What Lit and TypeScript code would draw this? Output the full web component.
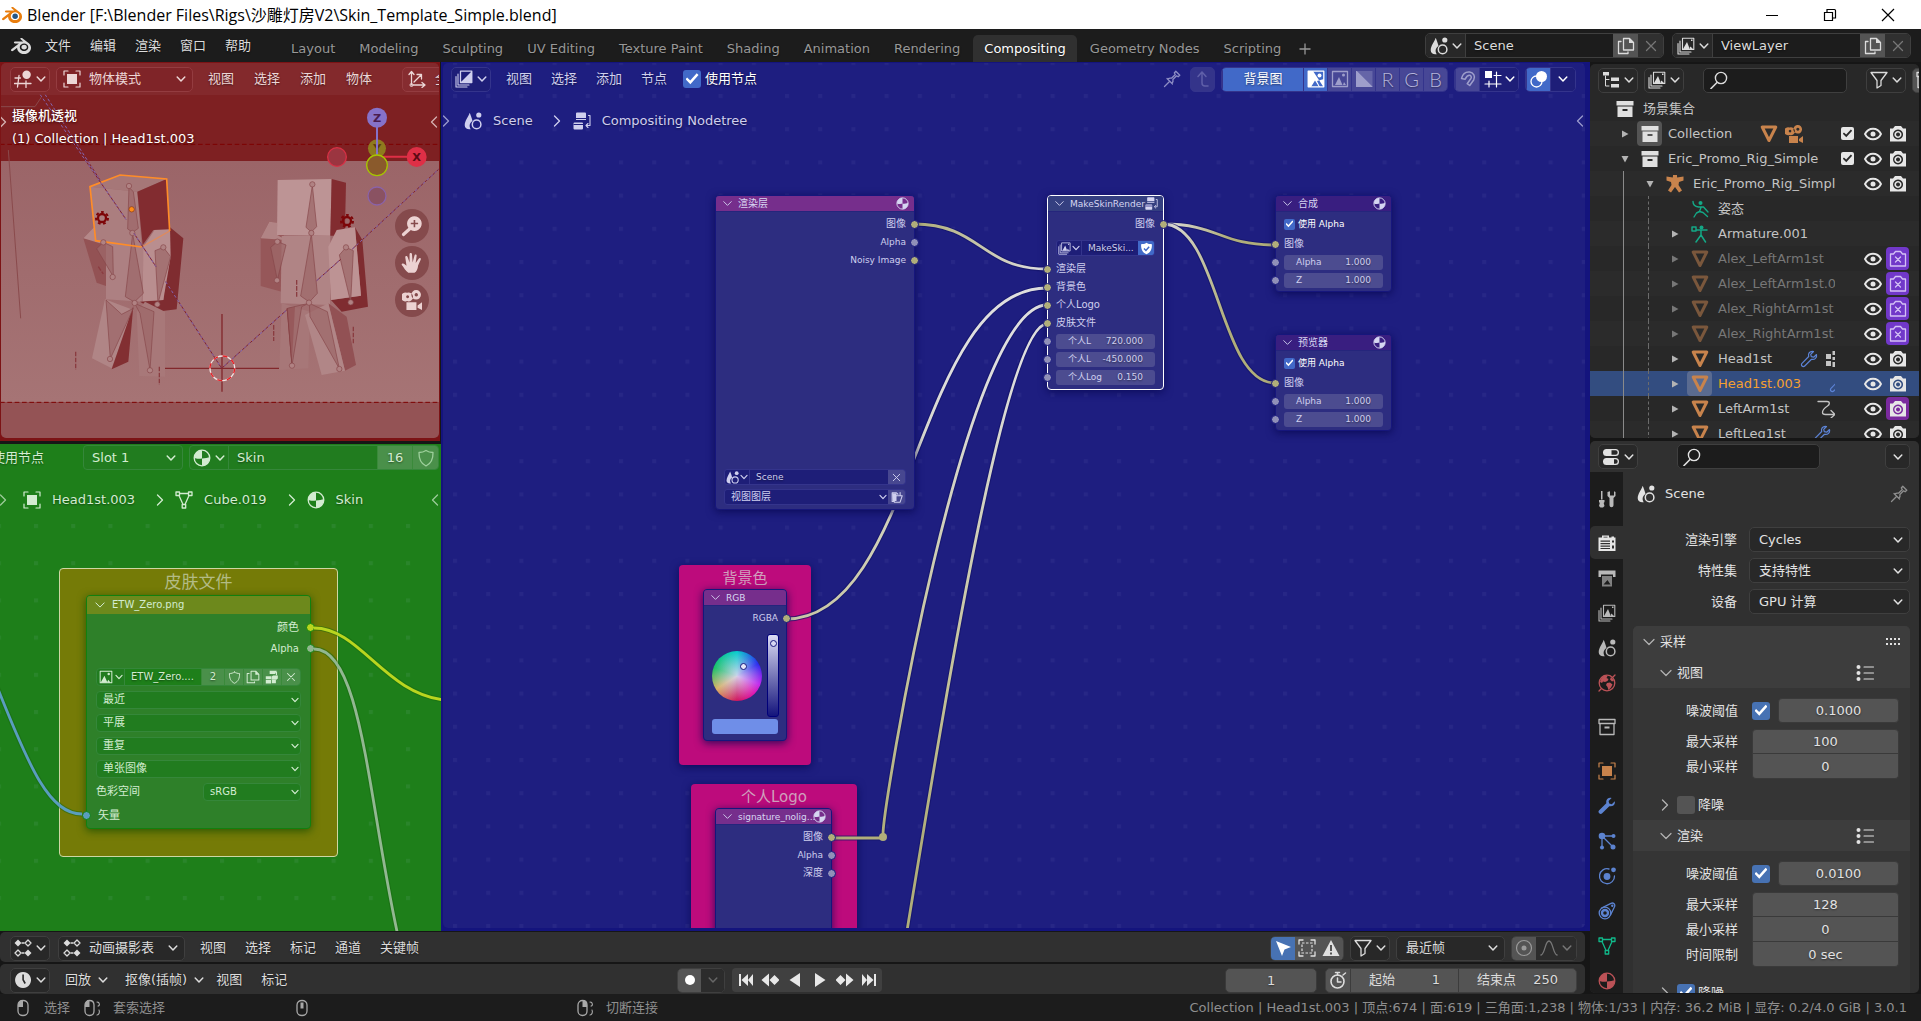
import { LitElement, html, css, svg, nothing, type TemplateResult } from "lit";
import { customElement, property } from "lit/decorators.js";
import { classMap } from "lit/directives/class-map.js";

/* ---------------------------------------------------------------- icons */

const line = (d: string, w = 1.3) =>
  svg`<path d=${d} fill="none" stroke="currentColor" stroke-width=${w} stroke-linejoin="round" stroke-linecap="round"/>`;
const fill = (d: string) => svg`<path d=${d} fill="currentColor" fill-rule="evenodd"/>`;
const dim = (d: string) => svg`<path d=${d} fill="currentColor" opacity=".65" fill-rule="evenodd"/>`;

const blenderMark =
  "M12.51 13.214c.046-.8.438-1.506 1.03-2.006a3.424 3.424 0 0 1 2.212-.79c.85 0 1.631.3 2.211.79.592.5.983 1.206 1.028 2.005.045.823-.285 1.586-.865 2.153a3.389 3.389 0 0 1-2.374.938 3.393 3.393 0 0 1-2.376-.938c-.58-.567-.91-1.33-.865-2.152M7.35 14.831c.006.314.106.922.256 1.398a7.372 7.372 0 0 0 1.593 2.757 8.227 8.227 0 0 0 2.787 2.001 8.947 8.947 0 0 0 3.66.76 8.964 8.964 0 0 0 3.657-.772 8.285 8.285 0 0 0 2.785-2.01 7.428 7.428 0 0 0 1.592-2.762 6.964 6.964 0 0 0 .25-3.074 7.123 7.123 0 0 0-1.016-2.779 7.764 7.764 0 0 0-1.852-2.043h.002L13.566 2.55l-.02-.015c-.492-.378-1.319-.376-1.86.002-.547.382-.609 1.015-.123 1.415l-.001.001 3.126 2.543-9.53.01h-.013c-.788.001-1.545.518-1.695 1.172-.154.665.38 1.217 1.2 1.22V8.9l4.83-.01-8.62 6.617-.034.025c-.813.622-1.075 1.658-.563 2.313.52.667 1.625.668 2.447.004L7.414 14s-.069.52-.063.831zm12.09 1.741c-.97.988-2.326 1.548-3.795 1.55-1.47.004-2.827-.552-3.797-1.538a4.51 4.51 0 0 1-1.036-1.622 4.282 4.282 0 0 1 .282-3.519 4.702 4.702 0 0 1 1.153-1.371c.942-.768 2.141-1.183 3.396-1.185 1.256-.002 2.455.41 3.398 1.175.48.391.87.854 1.152 1.367a4.28 4.28 0 0 1 .522 1.706 4.236 4.236 0 0 1-.239 1.811 4.54 4.54 0 0 1-1.035 1.626";

const wrenchPath =
  "M16.8 4.2l-3 3-2.6-.6-.6-2.6 3-3c-2.600-.8-5.200.8-5.400 3.400l.1 1.800-7.100 7.100a2 2 0 0 0 3 3l7.100-7.100c3.600.8 6.200-1.600 5.500-5z";

const icons: Record<string, { box?: string; art: unknown }> = {
  blender: { box: "0 1 24 22", art: fill(blenderMark) },
  blenderColor: {
    box: "0 1 24 22",
    art: svg`<path d=${blenderMark} fill="#e87d0d"/><circle cx="15.700" cy="13.500" r="4.600" fill="#fff"/><circle cx="15.750" cy="13.400" r="3.300" fill="#265787"/>`,
  },
  chev: { box: "4 4 10 10", art: line("M5.200 7l3.800 4 3.800-4", 1.5) },
  chevThin: { box: "3 3 12 12", art: line("M4 6.500l5 5 5-5", 1.2) },
  right: { box: "3 3 12 12", art: line("M6.500 4l5 5-5 5", 1.300) },
  left: { box: "3 3 12 12", art: line("M11.500 4l-5 5 5 5", 1.300) },
  view3d: { art: svg`${line("M1 8h5.500M0.500 13.500h16.500M5 5.500L3.500 17M12 11v6.500", 1.300)}<circle cx="12.600" cy="4.700" r="4.200" fill="currentColor"/>` },
  object: { art: svg`${line("M1 5V1h4M13 1h4v4M17 13v4h-4M5 17H1v-4", 1.200)}<rect x="4" y="4" width="10" height="10" fill="currentColor"/>` },
  orient: { art: svg`${line("M3.500 15V2M1 4.500L3.500 1.500 6 4.500M5 15h11.500M14 12.500l3 2.500-3 2.500M6 12l7-7M9 4.500h4.500V9", 1.300)}<circle cx="3.500" cy="15" r="1.500" fill="none" stroke="currentColor"/>` },
  comp: { art: svg`${line("M5.500 1.200h11.300v11.300H5.500z", 1.300)}${fill("M17 1v12H5z")}${line("M3 4v11h11M1 6.500V17h11", 1.100)}` },
  scene: { art: svg`${fill("M5.700.8C4.500 4.500.7 9 .7 13.200c0 2.600 2.200 4 4.500 4h1.600c-2-3-1.400-6.300 1.700-8.300C8 6.500 6.500 3 5.700.8z")}<circle cx="14.800" cy="3" r="2.600" fill="currentColor"/><circle cx="12.600" cy="12.400" r="4.300" fill="none" stroke="currentColor" stroke-width="1.500"/>` },
  nodetree: { art: svg`${fill("M4 .5h8a1 1 0 0 1 1 1V6H3V1.500a1 1 0 0 1 1-1zM2 10.500h7a1 1 0 0 1 1 1v5a1 1 0 0 1-1 1H1.500a1 1 0 0 1-1-1v-5a1 1 0 0 1 1-1zM3 7h10v1H3z")}<path d="M.5 12.500h9.500" stroke="#1e1e80"/>${line("M15.500 3.500h1.500v10h-3.500M15 11.500l-2 2 2 2", 1.100)}` },
  meshdata: { art: svg`${line("M4 4.500l4 9M14 4.500l-4 9M5 2.500h8M1 1h3.500v3.500H1zM13.500 1H17v3.500h-3.500zM7.200 13.500h3.500V17H7.200z", 1.300)}` },
  material: { art: svg`<circle cx="9" cy="9" r="7.800" fill="none" stroke="currentColor" stroke-width="1.300"/>${fill("M9 1.200V9.500C6 9.800 3 9.800 1.200 9A7.800 7.800 0 0 1 9 1.200zM9 9.500c3-.2 6-.6 7.800-1.500A7.800 7.800 0 0 1 9 16.800z")}` },
  shield: { art: line("M9 1.500c2.200 1.500 4.500 2 7 2 .2 6.500-1.800 11-7 13.500C3.800 14.500 1.800 10 2 3.500c2.500 0 4.800-.5 7-2z") },
  shieldOn: { art: svg`${fill("M9 1c2.200 1.500 4.500 2 7.500 2 .2 7-2 11.500-7.500 14C3.500 14.500 1.300 10 1.500 3c3 0 5.300-.5 7.500-2z")}<path d="M5.500 9l2.700 2.700 4.500-5" fill="none" stroke="#4169c8" stroke-width="2"/>` },
  image: { art: svg`${line("M1.500 1.500h15v15h-15z")}${fill("M2 16.500l5-9 4 9zM10 16.500l2-4 3 4z")}<circle cx="12.500" cy="5" r="1.600" fill="currentColor"/>` },
  layers: { art: svg`${line("M5.500 1.200h11.300v11.300H5.500zM3 4v11h11M1 6.500V17h11", 1.100)}${fill("M6 12l4-7 2.800 7zM12 12l1.500-2.500L16 12zM14 2.500h1.500V4H14z")}` },
  copy: { art: svg`${line("M6.500 1.500h6l4 4v7.500h-10zM4 4.500H1.500v12h9.500V15", 1.300)}${fill("M12 1l5 5h-5z")}` },
  pack: { art: fill("M6 1h9l-2 4H6zM15.500 1.500v4.500L14 7V3zM1 8h7v4H1zM8.500 8.500l2-1.500h6v4l-2 1.500h-6zM1 13h7v4.500H1zM9 13h5v4H9z") },
  close: { art: line("M4.500 4.500l9 9M13.500 4.500l-9 9", 1.300) },
  folderRef: { art: svg`${line("M3 2.500h6l2 2M3 2.500v12h3l2-8h9l-3 9H6M14 2v4", 1.500)}${fill("M3 3h6v11H4z")}` },
  pin: { art: line("M1.500 16.500l5-5M4 8.500l5.500 5.500M5 9c1-1 2-1.200 3.500-.8l3.800-3.700-1-1.500 1.500-1.700 4 4-1.700 1.500-1.500-1-3.700 3.700c.4 1.500.2 2.500-.9 3.500") },
  up: { art: line("M4 6.500L8 2l4 4.500M8 2v11c0 2 1 3 3 3h3", 1.500) },
  imgAlpha: { art: svg`${line("M1.200 1.200h15.600v15.600H1.200z")}${fill("M1 1h5l10.500 16H12L8 10.500 4 17H1zM10 11l3 6h4V9z")}<circle cx="12.500" cy="5.500" r="2" fill="currentColor"/>` },
  imgColor: { art: svg`${line("M1.500 1.500h15v15h-15z")}${fill("M4 15l4-8 3.500 8zM12 15l1-3 2 3z")}<circle cx="12.500" cy="5" r="1.500" fill="currentColor"/>` },
  alpha: { art: svg`${fill("M1 1h1l15.500 15.500v.5H1z")}<path d="M2 1h15.500v15.500z" fill="currentColor" opacity=".35"/>` },
  magnet: { art: line("M2.500 8.500c1-4 4-6.800 8-6.500 4 .3 6.300 4.500 4.200 8l-4 5.500-2.500-1.800 3.700-5.200c1-1.500 0-3.200-1.500-3.200-2 0-3.300 1.800-4.400 4z", 1.500) },
  snap: { art: svg`${fill("M1 1h7v7H1z")}${line("M12.500 2v15M5 11v6M10 5.500h7M1 14h16", 1.200)}` },
  overlay: { art: svg`<circle cx="11.500" cy="6.500" r="5.500" fill="currentColor"/><circle cx="6.500" cy="11.500" r="5.500" fill="none" stroke="currentColor" stroke-width="1.300"/>` },
  outliner: { art: svg`${fill("M1 1h6v3.500H1zM9 6.500h8v3.500H9zM9 13h8v3.500H9z")}${line("M3.500 5v10H7M3.500 8.500H7", 1)}` },
  search: { art: svg`<circle cx="11" cy="7" r="5.600" fill="none" stroke="currentColor" stroke-width="1.400"/>${line("M7 11.500L1 17.500", 1.600)}` },
  filter: { art: line("M1 1.500h16L11 9.500v5l-4 2.500V9.500z", 1.300) },
  collection: { art: fill("M.5 1h17v4.500H.5zM1.500 6.500h15V17h-15zM6.500 9v2h5V9z") },
  collectionLine: { art: svg`${line("M1 1.500h16v4H1zM2 5.500h14v11H2z")}${fill("M6.500 8.500h5v2h-5z")}` },
  mesh: { art: line("M2.200 2h13.600L9 15.500z", 3) },
  movie: { art: fill("M4.500 2.500a4 4 0 1 1 .1 7.500 4 4 0 1 1-.1-7.500zM5 4.800a1.300 1.300 0 1 0 .1 0zM12.800 0a4.300 4.300 0 1 1-.1 8.600 4.300 4.300 0 0 1 0-8.600zM12.800 2.800a1.500 1.500 0 1 0 .1 0zM4 11h9v7H4zM14 14l4-3v7l-4-2z") },
  armature: { art: fill("M7 .8a2 2 0 0 1 4 0l.2 1.700L17.500 1.500v4L13 7l-.5 3 3.500 5.500-3 2-4-5.500-4 5.500-3-2L5.500 10 5 7 .5 5.500v-4l6.300 1z") },
  pose: { art: svg`${line("M2 1.500c0 3 2 5 5.500 5.500h5l4.500 5M10 7.500l-1.500 4-3 1.500L3 17M8.500 11.500l3.500 1 4.500 4", 1.400)}<circle cx="9.500" cy="3" r="2" fill="currentColor"/>` },
  armdata: { art: svg`${line("M1 2h4v4H1zM5 5h11M10 6v4l-5 7M10 10l4.500 7", 1.500)}<circle cx="10.500" cy="2.500" r="2" fill="currentColor"/>` },
  wrench: { art: fill(wrenchPath) },
  wrenchLine: { art: line("M16.500 4.500l-2.800 2.700-2.400-.5-.6-2.400 2.800-2.800c-2.500-.6-4.800 1-5 3.300l.2 1.700-6.700 6.800a1.900 1.900 0 0 0 2.700 2.700l6.800-6.700c3.300.7 5.700-1.500 5-4.800z", 1.200) },
  vgroup: { art: fill("M1 4h5v5H1zM1 11h5v5H1zM7.500 1H13v4H7.500zM7.500 7H12v3H7.500zM7.500 12H12v5H7.500z") },
  curve: { art: line("M1 1.500h9c3 0 3 3 .5 4.500-3 2-5 4-5 6.500 0 1.500 1.500 2 3 2h9M14 10.500l4 4-4 3.500", 1.300) },
  eye: { art: svg`${line("M1 9c2-4 5-5.300 8-5.300S15 5 17 9c-2 4-5 5.300-8 5.300S3 13 1 9z", 1.900)}<circle cx="9" cy="9" r="2.500" fill="currentColor"/>` },
  camera: { art: fill("M1 3.500h3L6 1h6l2 2.500h3V16.500H1zM9 4.500a5 5 0 1 0 .1 0zM9 6a3.500 3.500 0 1 1-.1 0zM9 7.500a2 2 0 1 0 .1 0z") },
  cameraOff: { art: line("M1.500 4h3L6.500 1.500h5L13.500 4h3v12h-15zM6.500 7l5 5M11.500 7l-5 5", 1.300) },
  properties: { art: svg`${fill("M4.500 1h9a3.500 3.500 0 0 1 0 7h-9a3.500 3.500 0 0 1 0-7zM9.500 2.300v4.400h4a2.200 2.200 0 0 0 0-4.400z")}${fill("M4.500 10h9a3.500 3.500 0 0 1 0 7h-9a3.500 3.500 0 0 1 0-7zM12 11.300v4.400h1.500a2.200 2.200 0 0 0 0-4.400z")}` },
  tool: { art: svg`${fill("M3 1h1.500v8.500H3zM1 10h5.500v2l-.8 1 .8 3-1.500 1.500h-2.500L1 16l.8-3L1 12zM9.500 2v4l2 2V15c0 3 4 3 4 0V8l2-2V2l-1.500-.8v4.300h-4V1.200z")}` },
  render: { art: fill("M.5 3.500H4V1.500h7v2h2.500v-1H16v1h1.500V17H.5zM5.500 3.500h4v-.7h-4zM2.500 6.500v1.200H12V6.500zM2.500 9v1.200H12V9zM2.500 11.500v1.200H12v-1.200zM2.500 14v1H12v-1zM14 6.500v2h2v-2zM14 11.500v3h2v-3z") },
  output: { art: svg`${fill("M.5 1.500h17V8H15V5.500H3V8H.5z")}${dim("M4 7h10v10.500H4zM5.500 15.500h7L9.500 11z")}` },
  world: { art: svg`<circle cx="9" cy="9" r="7.800" fill="none" stroke="currentColor" stroke-width="1.300"/>${fill("M3.500 4c2-2.500 5-3 6-2l-1 2 2 1-1 2-2.500 1-2-.5-1 1.500-2-1zM9 9l3-.5 2.500 2-1.500 3-2.500 2.500-1-3-1.500-2zM13 3l3 3.500-2 1-2-2z")}${line("M1 17l2-2M17 1l-2 2")}` },
  particles: { art: svg`${line("M4.500 4H15M4 5v10M5 5l10 10", 1.300)}<circle cx="4" cy="4" r="3.300" fill="currentColor"/><circle cx="15.500" cy="4" r="2" fill="currentColor"/><circle cx="4" cy="15.500" r="2" fill="currentColor"/><circle cx="15" cy="15" r="2.500" fill="currentColor"/>` },
  physics: { art: svg`${line("M11 2A7.500 7.500 0 1 0 16.500 9", 1.300)}<circle cx="9" cy="9.500" r="3.400" fill="currentColor"/><circle cx="15.500" cy="2.800" r="2.400" fill="currentColor"/>` },
  constraint: { art: svg`<circle cx="7" cy="11" r="5.800" fill="none" stroke="currentColor" stroke-width="1.300"/><circle cx="7" cy="11" r="3" fill="none" stroke="currentColor" stroke-width="2.400"/>${line("M3.500 6l9.500-4.700c2.500-1 4.500 1 3.500 3.500L12.500 13")}<circle cx="14.300" cy="3.700" r="1.200" fill="currentColor"/>` },
  preset: { art: svg`<circle cx="2.500" cy="3" r="2" fill="currentColor"/><circle cx="2.500" cy="9" r="2" fill="currentColor"/><circle cx="2.500" cy="15" r="2" fill="currentColor"/>${line("M8 3h9.500M8 9h9.500M8 15h9.500", 1.100)}` },
  grip: { box: "0 0 16 8", art: fill("M0 0h2v2H0zM4 0h2v2H4zM8 0h2v2H8zM12 0h2v2h-2zM0 5h2v2H0zM4 5h2v2H4zM8 5h2v2H8zM12 5h2v2h-2z") },
  dope: { art: svg`${fill("M4 .5L7.500 4 4 7.500.5 4zM14 10.500l3.500 3.500-3.500 3.500-3.500-3.500z")}${line("M14 1l3 3-3 3-3-3zM4 11l3 3-3 3-3-3z", 1.300)}${line("M8 4h2M8 14h2", 1.300)}` },
  clock: { art: fill("M9 1a8 8 0 1 0 .1 0zM8.300 3.500h1.600v5l2 3.500-1.400 1-2.200-4z") },
  record: { art: svg`<circle cx="9" cy="9" r="5" fill="currentColor"/>` },
  first: { art: fill("M3 3h2v12H3zM12 3v12L5.500 9zM17 3v12l-5-6z") },
  prevKey: { art: fill("M8 2.500v13L.5 9zM13.500 4l5 5-5 5-5-5z") },
  playBack: { art: fill("M14 2v14L3.500 9z") },
  play: { art: fill("M4 2v14L14.500 9z") },
  nextKey: { art: fill("M10 2.500v13L17.500 9zM4.500 4l-5 5 5 5 5-5z") },
  last: { art: fill("M15 3h-2v12h2zM6 3v12l6.500-6zM1 3v12l5-6z") },
  cursor: { art: fill("M2 2l15 6-6.500 2.500L8 17z") },
  selbox: { art: svg`${line("M1 5V1h4M13 1h4v4M17 13v4h-4M5 17H1v-4", 1.300)}<rect x="4" y="4" width="10" height="10" fill="none" stroke="currentColor" stroke-width="1.200" stroke-dasharray="2.500 1.500"/>` },
  warn: { art: fill("M9 1l8.500 16H.5zM8 6v6h2V6zM8 13.500v2h2v-2z") },
  stopwatch: { art: svg`<circle cx="8.500" cy="10.500" r="6.500" fill="none" stroke="currentColor" stroke-width="1.600"/>${line("M6.500 1.500h4M8.500 2v2M14 4l2.500-2M8.500 7v4H12", 1.500)}` },
  proportional: { art: svg`<circle cx="9" cy="9" r="7.500" fill="none" stroke="currentColor" stroke-width="1.200"/><circle cx="9" cy="9" r="2.500" fill="currentColor"/>` },
  falloff: { art: line("M1 16c4-1 4-14 8-14s4 13 8 14") },
  mouse: { art: svg`${line("M4 8V6c0-6 10-6 10 0v6c0 6-10 6-10 0z", 1.300)}${fill("M4 8V6c0-3 2-5 5-5v7z")}` },
  mouseMove: { art: svg`${line("M2 8V6c0-6 9-6 9 0v6c0 6-9 6-9 0z", 1.300)}${fill("M2 8V6c0-3 2-5 4.500-5v7z")}${line("M14 3c3 0 3 4 1 4M14 16c2 0 3-3 2-5", 1.100)}` },
  mouseMid: { art: svg`${line("M4 8V6c0-6 10-6 10 0v6c0 6-10 6-10 0z", 1.300)}${fill("M7.500 3.500h3v6h-3z")}` },
  mouseRight: { art: svg`${line("M2 8V6c0-6 9-6 9 0v6c0 6-9 6-9 0z", 1.300)}${fill("M11 8V6c0-3-2-5-4.500-5v7z")}${line("M14 3c3 0 3 4 1 4M14 16c2 0 3-3 2-5", 1.100)}` },
  zoomIn: { art: svg`${fill("M11 1a6 6 0 1 1-.1 0z")}<path d="M11 4v6M8 7h6" stroke="#854a4c" stroke-width="1.300"/>${line("M7 11.500L2 16", 2.600)}` },
  hand: { art: fill("M6 17c-2-1-3.500-4-5.500-6.500 0-1.200 1.500-1.500 2.500-.5l1.500 1.200L3.500 4.500c-.2-1.500 1.500-1.800 2-.3L7 8.500V2c0-1.500 1.900-1.500 2 0l.5 6.500L11 3c.3-1.500 2-1.200 1.800.3L12 9l2.500-3.500c.9-1.200 2.200-.3 1.600.9L14 11c-.3 3-1.200 5-3 6z") },
  minimize: { art: svg`<path d="M3 9.500h12" stroke="currentColor"/>` },
  restore: { art: svg`<path d="M3.500 6.500h8v8h-8zM6 6V3.500h7.500a1 1 0 0 1 1 1V12H12" fill="none" stroke="currentColor" stroke-width="1.200"/>` },
  windowClose: { art: svg`<path d="M3 3l12 12M15 3L3 15" stroke="currentColor" stroke-width="1.200"/>` },
  plus: { art: svg`<path d="M9 3.500v11M3.500 9h11" stroke="currentColor" stroke-width="1.300"/>` },
  closed: { box: "0 0 10 10", art: fill("M2 1.500v7L8.500 5z") },
  open: { box: "0 0 10 10", art: fill("M1.500 2h7L5 8.500z") },
};

@customElement("b-icon")
export class BIcon extends LitElement {
  @property() name = "";
  @property({ type: Number }) size = 18;
  static styles = css`
    :host { display: inline-flex; align-items: center; flex: none; pointer-events: none; }
    svg { display: block; }
  `;
  render() {
    const icon = icons[this.name];
    return svg`<svg width=${this.size} height=${this.size} viewBox=${icon?.box ?? "0 0 18 18"} aria-hidden="true">${icon?.art}</svg>`;
  }
}

const ic = (name: string, size = 18) => html`<b-icon name=${name} size=${size}></b-icon>`;

/* -------------------------------------------------------------- shared */

const ui = css`
  * { box-sizing: border-box; }
  :host {
    display: block;
    min-width: 0;
    min-height: 0;
    font: 13px/16px "DejaVu Sans", "Noto Sans CJK SC", sans-serif;
    color: var(--text, #d9d9d9);
  }
  button, input, select {
    font: inherit; color: inherit; background: none; border: 0; padding: 0; margin: 0; outline: 0;
  }
  button { display: flex; align-items: center; justify-content: center; white-space: nowrap; text-shadow: 0 1px 2px rgba(0, 0, 0, .45); }
  select { appearance: none; width: 100%; text-overflow: ellipsis; }
  input { min-width: 0; }
  input[type="text"] { width: 100%; text-shadow: 0 1px 2px rgba(0, 0, 0, .45); }
  input[type="checkbox"] {
    appearance: none; flex: none; width: 18px; height: 18px; border-radius: 3px; background: #545454;
    display: grid; place-items: center;
  }
  input[type="checkbox"]:checked { background: var(--check, #4772b3); }
  input[type="checkbox"]:checked::before {
    content: ""; width: 72%; height: 68%; background: #fff;
    clip-path: polygon(0 52%, 12% 38%, 36% 62%, 86% 4%, 100% 18%, 37% 92%);
  }
  .bar { display: flex; align-items: center; height: 33px; padding: 0 10px; overflow: hidden; position: relative; }
  .box {
    display: flex; align-items: stretch; flex: none; height: 25px; overflow: hidden;
    border: 1px solid var(--line, #3f3f3f); border-radius: 5px; background: var(--box, #282828);
  }
  .drop { width: 40px; gap: 4px; flex: none; align-items: center; }
  .menu { flex: none; padding: 0 9px 0 10px; }
  .space { flex: 1; }
  .pick { display: grid; align-items: center; flex: 1; min-width: 0; }
  .pick > * { grid-area: 1 / 1; }
  .pick > b-icon { justify-self: end; margin-right: 6px; }
  .crumbs { display: flex; align-items: center; position: relative; height: 24px; white-space: nowrap; text-shadow: 0 1px 2px rgba(0, 0, 0, .45); }
  .node {
    position: absolute; display: flex; flex-direction: column; border-radius: 4px;
    background: var(--node); border: 1px solid var(--edge);
    box-shadow: 0 2px 8px var(--shade);
  }
  .head { display: flex; align-items: center; flex: none; padding: 0 5px 0 7px; gap: 6px; border-radius: 3px 3px 0 0; white-space: nowrap; }
  .head .name { flex: 1; min-width: 0; }
  .pad { padding-top: 3px; flex: none; }
  .row { display: flex; align-items: center; flex: none; position: relative; padding: 0 8px; white-space: nowrap; }
  .row.out { justify-content: flex-end; }
  .sock { position: absolute; width: 9px; height: 9px; border-radius: 50%; border: 1px solid var(--edge); background: var(--dot); }
  .row.in .sock { left: -5px; }
  .row.out .sock { right: -5px; }
  .frame { position: absolute; border-radius: 4px; text-align: center; }
  .wires { position: absolute; left: 0; top: 0; overflow: visible; pointer-events: none; }
  .canvas { position: absolute; inset: 0; overflow: hidden; }
  .dots { position: absolute; width: 100%; height: 100%; }
`;

const drop = (name: string, label: string) =>
  html`<button class="box drop" aria-label=${label}>${ic(name)}${ic("chev", 10)}</button>`;

const pick = (value: string, label: string, size = 10) =>
  html`<span class="pick"><select aria-label=${label}><option>${value}</option></select>${ic("chev", size)}</span>`;

const place = (x: number, y: number, w: number, h: number) =>
  `left:${x}px;top:${y}px;width:${w}px;height:${h}px`;

/* ------------------------------------------------------------ viewport */

@customElement("b-viewport")
export class BViewport extends LitElement {
  static styles = [ui, css`
    :host { background: #7c1315; padding: 1px 1px 3px; margin-right: 1px; overflow: hidden; --text: #ecd6d6; --line: #943c40; --box: #7f2428; }
    .view { position: relative; height: 100%; overflow: hidden; border-radius: 5px; background: #7e2022; }
    .scene { position: absolute; left: 0; top: 0; width: 438px; height: 376px; min-height: 100%; }
    .bar { background: rgba(133, 44, 48, .75); padding: 0 0 0 9px; height: 32px; }
    .mode { width: 137px; margin: 0 5px 0 6px; padding-left: 6px; align-items: center; gap: 8px; }
    .global { margin-left: 20px; width: 90px; padding-left: 5px; align-items: center; justify-content: flex-start; gap: 9px; background: #862c30; }
    .info { position: relative; padding: 9px 11px; line-height: 23px; color: #fff; font-weight: 500; text-shadow: 0 1px 3px #400; }
    .info p { margin: 0; }
    .tools { position: absolute; right: 10px; top: 146px; display: flex; flex-direction: column; gap: 3px; }
    .tools button { width: 34px; height: 34px; border-radius: 50%; background: #854a4c; color: #ecd2d2; }
    .axis { font: bold 34px "DejaVu Sans", sans-serif; text-anchor: middle; }
    .menu { padding: 0 10px; }
    .side { position: absolute; top: 53px; opacity: .8; }
    .l { left: -4px; } .r { right: -1px; }
  `];
  render() {
    const poly = (p: string, f: string) => svg`<polygon points=${p} fill=${f}/>`;
    const bone = (p: string) => svg`<polygon points=${p} fill="#9d686a" fill-opacity=".75" stroke="#86474a" stroke-width="2"/>`;
    const joint = (x: number, y: number) => svg`<circle cx=${x} cy=${y} r="8" fill="#b08283" stroke="#86474a" stroke-width="2"/>`;
    const dash = (d: string) => svg`<path d=${d} fill="none" stroke="#7d1f2b" stroke-width="3"/><path d=${d} fill="none" stroke="#8567b0" stroke-width="3" stroke-dasharray="9 7"/>`;
    const gear = (x: number, y: number) => svg`<circle cx=${x} cy=${y} r="12" fill="none" stroke="#7d0508" stroke-width="7"/><circle cx=${x} cy=${y} r="18" fill="none" stroke="#7d0508" stroke-width="6" stroke-dasharray="8 8"/>`;
    return html`
      <div class="view">
        <svg class="scene" viewBox="0 0 438 376" preserveAspectRatio="none" aria-hidden="true">
          <defs><linearGradient id="floor" x2="0" y2="1"><stop stop-color="#9b6568"/><stop offset="1" stop-color="#a67475"/></linearGradient></defs>
          <g transform="translate(-1 67) scale(.33333)">
            <rect x="0" y="93" width="1330" height="724" fill="url(#floor)"/>
            <rect x="0" y="817" width="1330" height="120" fill="#945355"/>
            <path d="M0 43h1330M0 817h1330" stroke="#7c0000" stroke-width="3" stroke-dasharray="14 8"/>
            <path d="M25 60L62 565M0 -70H105L125 -100" stroke="#8a4a4c" stroke-width="3" fill="none"/>
            ${poly("250,325 283,290 318,335 318,468 290,458", "#935254")}
            ${poly("250,325 283,290 318,335 300,340", "#b48889")}
            ${poly("318,335 432,350 425,515 318,508", "#ad8082")}
            ${poly("510,292 550,325 530,538 470,545 420,515 490,510", "#7f2c30")}
            ${poly("430,350 465,298 510,292 512,380 490,510 428,514", "#b98e8f")}
            ${poly("270,170 360,135 500,147 412,185", "#a67778")}
            ${poly("270,170 412,185 425,350 287,332", "#ab7e7f")}
            ${poly("412,185 500,147 509,298 460,300 428,345", "#822c30")}
            ${poly("315,508 400,540 335,715 276,685", "#b08586")}
            ${poly("400,528 385,695 335,718", "#822f32")}
            ${poly("410,545 435,515 495,545 495,740 418,738", "#a87879")}
            ${poly("782,325 808,275 832,278 858,330 845,485 782,468", "#965759")}
            ${poly("782,325 808,275 832,278 832,315 858,330", "#b18485")}
            ${poly("845,318 991,318 990,525 842,520", "#b08485")}
            ${poly("833,150 995,147 991,317 831,315", "#bd9495")}
            ${poly("995,147 1038,158 1035,295 1005,317 991,317", "#822c30")}
            ${poly("1065,292 1087,330 1104,530 1025,545 993,510 1083,497", "#7f2c30")}
            ${poly("1010,300 1065,292 1083,497 993,510 985,350", "#bd9394")}
            ${poly("845,520 930,545 925,715 838,720", "#a77778")}
            ${poly("860,535 875,710 885,530", "#822f32")}
            ${poly("985,520 1040,560 1068,705 1035,722", "#925154")}
            ${poly("915,555 985,520 1035,722 965,735", "#b18687")}
            ${bone("387,172 400,185 415,295 398,307 383,297")}
            ${bone("398,312 430,490 403,516 376,500")}
            ${bone("310,337 338,350 340,440 290,356")}
            ${bone("490,352 512,380 474,520 465,362")}
            ${bone("318,510 365,553 400,535 331,686")}
            ${bone("404,520 462,545 450,720 420,550")}
            ${bone("937,166 950,290 934,306 918,292")}
            ${bone("934,312 952,490 928,516 902,498")}
            ${bone("832,335 858,345 832,450 812,352")}
            ${bone("1038,352 1060,362 1052,516 1018,375")}
            ${bone("926,520 862,535 876,706 905,530")}
            ${bone("928,520 982,545 1018,716 930,560")}
            <path d="M509 303L500 147 360 135 270 170 287 332 425 351" fill="none" stroke="#ff8c28" stroke-width="5"/>
            <path d="M509 303L425 351" stroke="#e08a5a" stroke-width="4"/>
            ${[[387,168],[397,309],[310,337],[338,441],[490,352],[472,523],[404,519],[330,687],[450,721],[937,163],[934,309],[832,335],[831,451],[1038,352],[1052,517],[927,518],[876,707],[1018,717]].map(([x, y]) => joint(x, y))}
            <circle cx="395" cy="238" r="8" fill="#ff8c1a" stroke="#8a3a10" stroke-width="2"/>
            ${gear(306, 264)}${gear(1041, 273)}
            <path d="M227 665v55M478 710v55M821 585v48M1060 590v50M295 410l15 22M890 450v50" stroke="#8a3c40" stroke-width="4" stroke-dasharray="14 4"/>
            ${dash("M120 -107L378 268M402 310L468 410M497 455L665 715L860 540M950 452L1022 388M1057 357L1318 116")}
            ${dash("M135 -107L300 150")}
            <path d="M666 552V785M495 715H837" stroke="#82282c" stroke-width="4" fill="none"/>
            <circle cx="667" cy="715" r="37" fill="none" stroke="#f4e4e4" stroke-width="4"/>
            <circle cx="667" cy="715" r="37" fill="none" stroke="#e81e24" stroke-width="4" stroke-dasharray="15 14"/>
            <path d="M1150 80H1225" stroke="#de2f46" stroke-width="6"/>
            <circle cx="1131" cy="55" r="27" fill="#8f7a1e"/><text class="axis" x="1131" y="67" fill="#5c3a10">Y</text>
            <path d="M1131 -10V78" stroke="#8672c9" stroke-width="6"/>
            <circle cx="1131" cy="106" r="31" fill="#8a5a2c" stroke="#a6c400" stroke-width="4"/>
            <circle cx="1131" cy="-37" r="30" fill="#8672c9"/><text class="axis" x="1131" y="-24" fill="#4a1c50">Z</text>
            <circle cx="1250" cy="81" r="30" fill="#de2f46"/><text class="axis" x="1250" y="94" fill="#5c0a14">X</text>
            <circle cx="1011" cy="81" r="28" fill="#9b3540" stroke="#d93045" stroke-width="4"/>
            <circle cx="1131" cy="198" r="27" fill="#8a5262" stroke="#8a62a8" stroke-width="4"/>
          </g>
        </svg>
        <div class="bar">
          ${drop("view3d", "编辑器类型")}
          <div class="box mode">${ic("object")}${pick("物体模式", "模式")}</div>
          ${["视图", "选择", "添加", "物体"].map((t) => html`<button class="menu">${t}</button>`)}
          <button class="box global">${ic("orient")}全局</button>
        </div>
        <div class="info"><p>摄像机透视</p><p>(1) Collection | Head1st.003</p></div>
        <span class="side l">${ic("right", 12)}</span><span class="side r">${ic("left", 12)}</span>
        <div class="tools">
          <button aria-label="缩放">${ic("zoomIn", 22)}</button>
          <button aria-label="平移">${ic("hand", 22)}</button>
          <button aria-label="摄像机">${ic("movie", 20)}</button>
        </div>
      </div>`;
  }
}

/* ------------------------------------------------------- shader editor */

@customElement("b-shader")
export class BShader extends LitElement {
  static styles = [ui, css`
    :host {
      position: relative; overflow: hidden; background: #1e7f1a;
      --text: #d3ecd1; --line: #35873a; --box: #217c1f; --node: #2e8029; --edge: #12800f; --shade: rgba(10, 70, 0, .7);
    }
    .bar { height: 27px; padding: 0 2px 0 2px; }
    .use { margin: 0 39px 0 -10px; flex: none; text-shadow: 0 1px 2px #0006; }
    .slot { width: 100px; padding-left: 8px; margin-right: 6px; }
    .mat { flex: 1; border-radius: 5px 0 0 5px; }
    .mat .drop { width: 39px; border-right: 1px solid var(--line); }
    .mat input { padding-left: 8px; }
    .tint { background: #4a904a; border-left: 1px solid #3a8a3a; }
    .users { width: 35px; flex: none; } .fake { width: 26px; flex: none; color: #9dcf9b; }
    .crumbs { margin-top: 17px; padding-left: 23px; }
    .crumbs .txt { margin: 0 19px 0 11px; } .crumbs .sep { margin-right: 9px; display: flex; }
    .side { position: absolute; top: 6px; opacity: .7; }
    .l { left: -3px; } .r { right: 0; }
    .frame { background: #757b07; border: 1px solid #ced7a4; color: #b3bb85; font-size: 17px; line-height: 26px; }
    .node { font-size: 10px; line-height: 14px; padding-bottom: 2px; }
    .zh { font-size: 11px; }
    .head { background: #6d891c; height: 18px; gap: 7px; padding-left: 8px; }
    .row { height: 21px; padding: 0 11px; }
    .fields { display: grid; gap: 5px; padding: 9px 9px 4px; margin: 0; }
    .box { height: 18px; border-radius: 4px; }
    .bar .box { height: 25px; }
    .fields .box { padding-left: 6px; }
    .fields .pick > b-icon { margin-right: 1px; }
    .fields .img { padding: 0; }
    .img .drop { width: 28px; gap: 2px; border-right: 1px solid var(--line); }
    .img input { padding-left: 6px; background: #1e7f1a; }
    .img .tint { width: 19px; flex: none; } .img .n { width: 23px; }
    .space2 { display: grid; grid-template-columns: 1fr 98px; align-items: center; }
    .yellow { --dot: #b9d51f; } .grey { --dot: #92b791; } .blue { --dot: #5a9dbe; }
  `];
  render() {
    const out = (t: string, c: string, zh = false) =>
      html`<div class="row out ${c} ${zh ? "zh" : ""}">${t}<i class="sock"></i></div>`;
    return html`
      <div class="canvas">
        <svg class="dots" aria-hidden="true"><defs><pattern id="g" x="34" y="80" width="37.200" height="37.200" patternUnits="userSpaceOnUse"><rect width="4" height="4" fill="#2a852b"/></pattern></defs><rect y="60" width="100%" height="100%" fill="url(#g)"/></svg>
        <div class="frame" style=${place(59, 124, 279, 289)}>皮肤文件</div>
        <div class="node" style=${place(86, 151, 225, 234)}>
          <div class="head">${ic("chevThin", 10)}<span class="name">ETW_Zero.png</span></div>
          <div class="pad"></div>
          ${out("颜色", "yellow", true)}${out("Alpha", "grey")}
          <div class="fields">
            <div class="box img">
              <button class="drop" aria-label="图像">${ic("image", 14)}${ic("chev", 8)}</button>
              <input type="text" aria-label="图像名称" value="ETW_Zero....">
              <button class="tint n">2</button>
              <button class="tint" aria-label="伪用户">${ic("shield", 13)}</button>
              <button class="tint" aria-label="新建">${ic("copy", 14)}</button>
              <button class="tint" aria-label="打包">${ic("pack", 14)}</button>
              <button class="tint" aria-label="断开">${ic("close", 14)}</button>
            </div>
            ${["最近", "平展", "重复", "单张图像"].map((t) => html`<div class="box zh">${pick(t, t, 8)}</div>`)}
            <div class="space2"><span class="zh">色彩空间</span><div class="box">${pick("sRGB", "色彩空间", 8)}</div></div>
          </div>
          <div class="row in blue zh">矢量<i class="sock"></i></div>
        </div>
        <svg class="wires" width="440" height="488" aria-hidden="true">
          <g fill="none" stroke-width="5" stroke="#17680f" opacity=".5"><path d="M314 184C360 184 385 250 445 256"/><path d="M314 205C362 205 368 356 398 492"/><path d="M-4 240C30 326 50 370 82 370"/></g>
          <g fill="none" stroke-width="2.800"><path d="M314 184C360 184 385 250 445 256" stroke="#b9d51f"/><path d="M314 205C362 205 368 356 398 492" stroke="#92b791"/><path d="M-4 240C30 326 50 370 82 370" stroke="#5a9dbe"/></g>
        </svg>
      </div>
      <div class="bar">
        <span class="use">使用节点</span>
        <div class="box slot">${pick("Slot 1", "材质槽")}</div>
        <div class="box mat">
          <button class="drop" aria-label="材质">${ic("material")}${ic("chev", 10)}</button>
          <input type="text" aria-label="材质名称" value="Skin">
          <button class="tint users">16</button><button class="tint fake" aria-label="伪用户">${ic("shield")}</button>
        </div>
      </div>
      <div class="crumbs">
        <span class="side l">${ic("right", 12)}</span>
        ${ic("object")}<span class="txt">Head1st.003</span><span class="sep">${ic("right", 12)}</span>
        ${ic("meshdata")}<span class="txt">Cube.019</span><span class="sep">${ic("right", 12)}</span>
        ${ic("material")}<span class="txt">Skin</span>
        <span class="side r">${ic("left", 12)}</span>
      </div>`;
  }
}

/* ---------------------------------------------------------- compositor */

@customElement("b-compositor")
export class BCompositor extends LitElement {
  static styles = [ui, css`
    :host {
      background: #14147d; padding: 1px 5px 3px 2px;
      --text: #cfcfee; --line: #34348c; --box: #1e1e78; --node: #2d2d80; --edge: #16167c; --shade: rgba(8, 8, 80, .8); --check: #4169c8;
    }
    .view { position: relative; height: 100%; overflow: hidden; background: #1e1e80; border-radius: 5px; }
    .bar { padding: 0 9px 0 8px; height: 32px; }
    .drop { margin-right: 5px; }
    .use { display: flex; align-items: center; gap: 4px; margin-left: 7px; color: #fff; white-space: nowrap; text-shadow: 0 1px 2px #0008; }
    .pin { margin-right: 9px; color: #8d8dc4; }
    .up { width: 25px; margin-right: 6px; color: #5f5fa8; background: #34348a; align-items: center; }
    .group { margin-right: 6px; }
    .group button { width: 24px; background: #474796; color: #9e9ecb; border-left: 1px solid #34348c; }
    .group .wide { width: 81px; }
    .group .on { background: #4169c8; color: #fff; }
    .group .plain { width: 39px; background: var(--box); color: #fff; gap: 3px; }
    .group .mini { width: 25px; background: var(--box); color: #fff; }
    .group .chan { font: 300 20px/20px Lato, sans-serif; color: #b5b5dc; }
    .bar .last { margin-right: 0; }
    .crumbs { margin-top: 14px; padding-left: 21px; }
    .crumbs .txt { margin: 0 18px 0 11px; } .crumbs .sep { margin-right: 10px; display: flex; }
    .side { position: absolute; top: 6px; opacity: .7; } .l { left: -3px; } .r { right: -1px; }
    .frame { background: #bd0b7c; color: #cfa0bd; font-size: 15px; line-height: 26px; box-shadow: 0 2px 8px var(--shade); }
    .node { font-size: 9px; line-height: 14px; }
    .zh { font-size: 10px; }
    .node.sel { border-color: #fff; }
    .head { height: 16px; border-bottom: 1px solid #25257c; color: #d6d6f2; }
    .pink .head { background: #762e8c; } .teal .head { background: #343f80; } .violet .head { background: #391e80; }
    .row { height: 18px; }
    .box { height: 16px; border-radius: 3px; }
    .bar .box { height: 25px; border-radius: 5px; }
    .node .drop { width: 25px; margin: 0; gap: 1px; border-right: 1px solid var(--line); }
    .node input[type="text"] { padding-left: 6px; }
    .pickrow { margin: 0 8px 4px; }
    .pickrow.img { margin: 7px 8px 4px; height: 16px; }
    .pickrow .x { width: 17px; flex: none; background: #474790; }
    .pickrow .on { width: 16px; flex: none; background: #4169c8; color: #fff; }
    .pickrow select { padding-left: 6px; } .pick > b-icon { margin-right: 1px; }
    .num { flex: 1; display: flex; align-items: center; height: 15px; padding: 0 12px; border-radius: 3px; background: #4c4c90; }
    .num span { flex: none; }
    .node .num input { text-align: right; padding: 0; }
    .chk { gap: 3px; margin-bottom: 2px; color: #fff; }
    .chk input { width: 11px; height: 11px; border-radius: 2px; }
    .chk label { display: flex; gap: 3px; align-items: center; }
    .y { --dot: #b0ae7a; } .g { --dot: #9090b8; }
    .colour { display: flex; align-items: center; justify-content: space-between; padding: 0 7px 0 8px; margin-top: 7px; }
    .wheel { width: 50px; height: 50px; border-radius: 50%; position: relative;
      background: radial-gradient(circle, rgba(214, 214, 238, .95), rgba(214, 214, 238, 0) 72%), conic-gradient(#0cc, #2222ee 60deg, #c020ee 110deg, #e010b0 135deg, #d0105a 180deg, #d8b060 238deg, #10c060 290deg, #0cc); }
    .knob { position: absolute; width: 7px; height: 7px; border-radius: 50%; border: 1px solid #16167c; background: #e6e6fa; }
    .wheel .knob { left: 28px; top: 12px; }
    .value { width: 12px; height: 83px; border: 1px solid #00007a; border-radius: 3px; position: relative; background: linear-gradient(#dcdcf4, #14147c); }
    .value .knob { left: 2px; top: 5px; background: #d6d6f2; }
    .swatch { margin: 2px 8px 0; height: 15px; border-radius: 3px; background: #6f8ee8; }
  `];
  render() {
    const out = (t: string, c: string) => html`<div class="row out ${c} ${/[^\x00-\x7f]/.test(t) ? "zh" : ""}">${t}<i class="sock"></i></div>`;
    const inp = (t: string, c = "y") => html`<div class="row in zh ${c}">${t}<i class="sock"></i></div>`;
    const num = (t: string, v: string) =>
      html`<div class="row in g"><label class="num"><span>${t}</span><input type="text" value=${v}></label><i class="sock"></i></div>`;
    const head = (t: string, icon = "material") =>
      html`<div class="head">${ic("chevThin", 9)}<span class="name ${/[^\x00-\x7f]/.test(t) ? "zh" : ""}">${t}</span>${icon ? ic(icon, 13) : nothing}</div><div class="pad"></div>`;
    const output = (title: string, y: number) => html`
      <div class="node violet" style=${place(832, y, 117, 97)}>
        ${head(title)}
        <div class="row chk"><label><input type="checkbox" checked>使用 Alpha</label></div>
        ${inp("图像")}${num("Alpha", "1.000")}${num("Z", "1.000")}
      </div>`;
    const wire = (d: string, s: string) =>
      svg`<path d=${d} fill="none" stroke="#14146a" stroke-width="5" opacity=".7"/><path d=${d} fill="none" stroke=${s} stroke-width="2.800"/>`;
    return html`<div class="view">
      <div class="canvas">
        <svg class="dots" aria-hidden="true">
          <defs><pattern id="d" x="10" y="31" width="33.200" height="33.200" patternUnits="userSpaceOnUse"><rect width="4" height="4" fill="#272786"/></pattern></defs>
          <rect width="100%" height="100%" fill="url(#d)"/>
        </svg>
        <div class="frame" style=${place(236, 502, 132, 200)}>背景色</div>
        <div class="frame" style=${place(248, 721, 166, 200)}>个人Logo</div>
        <svg class="wires" width="1140" height="866" aria-hidden="true">
          <defs>
            <linearGradient id="toWhite" gradientUnits="userSpaceOnUse" x1="476" x2="600" y1="0" y2="0"><stop stop-color="#b0ae7a"/><stop offset="1" stop-color="#dedede"/></linearGradient>
            <linearGradient id="fromWhite" gradientUnits="userSpaceOnUse" x1="720" x2="830" y1="0" y2="0"><stop stop-color="#dedede"/><stop offset=".6" stop-color="#b0ae7a"/></linearGradient>
            <linearGradient id="rise" gradientUnits="userSpaceOnUse" x1="0" x2="0" y1="780" y2="300"><stop stop-color="#b0ae7a"/><stop offset=".35" stop-color="#c4c29a"/><stop offset="1" stop-color="#dedede"/></linearGradient>
          </defs>
          ${wire("M471 161C538 161 538 206 604 206", "url(#toWhite)")}
          ${wire("M343 556C473 556 473 225 604 225", "url(#rise)")}
          ${wire("M440 774C438 752 522 242 604 242", "url(#rise)")}
          ${wire("M462 880C502 637 562 261 604 261", "url(#rise)")}
          ${wire("M720 161C776 161 776 182 832 182", "url(#fromWhite)")}
          ${wire("M720 161C776 161 776 320 832 320", "url(#fromWhite)")}
          ${wire("M388 775H440", "#b0ae7a")}
          <circle cx="440" cy="774" r="4" fill="#b0ae7a"/>
        </svg>
        <div class="node pink" style=${place(272, 132, 200, 315)}>
          ${head("渲染层")}${out("图像", "y")}${out("Alpha", "g")}${out("Noisy Image", "y")}
          <div class="space"></div>
          <div class="box pickrow"><button class="drop" aria-label="场景">${ic("scene", 13)}${ic("chev", 8)}</button><input type="text" aria-label="场景名称" value="Scene"><button class="x" aria-label="断开">${ic("close", 13)}</button></div>
          <div class="box pickrow zh">${pick("视图图层", "视图图层", 8)}<button class="x" aria-label="渲染图层">${ic("folderRef", 13)}</button></div>
        </div>
        <div class="node teal sel" style=${place(604, 132, 117, 195)}>
          ${head("MakeSkinRender", "nodetree")}${out("图像", "y")}
          <div class="box pickrow img"><button class="drop" aria-label="节点组">${ic("layers", 13)}${ic("chev", 8)}</button><input type="text" aria-label="节点组名称" value="MakeSki..."><button class="on" aria-label="伪用户">${ic("shieldOn", 13)}</button></div>
          ${inp("渲染层")}${inp("背景色")}${inp("个人Logo")}${inp("皮肤文件")}
          ${num("个人L", "720.000")}${num("个人L", "-450.000")}${num("个人Log", "0.150")}
        </div>
        ${output("合成", 132)}${output("预览器", 271)}
        <div class="node pink" style=${place(260, 526, 84, 152)}>
          ${head("RGB", "")}${out("RGBA", "y")}
          <div class="colour"><div class="wheel"><i class="knob"></i></div><div class="value"><i class="knob"></i></div></div>
          <button class="swatch" aria-label="颜色"></button>
        </div>
        <div class="node pink" style=${place(272, 745, 117, 200)}>
          ${head("signature_nolig...")}${out("图像", "y")}${out("Alpha", "g")}${out("深度", "g")}
        </div>
      </div>
      <div class="bar">
        ${drop("comp", "编辑器类型")}
        ${["视图", "选择", "添加", "节点"].map((t) => html`<button class="menu">${t}</button>`)}
        <label class="use"><input type="checkbox" checked>使用节点</label>
        <div class="space"></div>
        <button class="pin" aria-label="固定">${ic("pin")}</button>
        <button class="box up" aria-label="上级">${ic("up")}</button>
        <div class="box group">
          <button class="wide on">背景图</button><button class="on" aria-label="颜色和Alpha">${ic("imgAlpha")}</button>
          <button aria-label="颜色">${ic("imgColor")}</button><button aria-label="Alpha">${ic("alpha")}</button>
          ${["R", "G", "B"].map((c) => html`<button class="chan">${c}</button>`)}
        </div>
        <div class="box group"><button aria-label="吸附">${ic("magnet")}</button><button class="plain" aria-label="吸附到">${ic("snap")}${ic("chev", 10)}</button></div>
        <div class="box group last"><button class="on" aria-label="叠加层">${ic("overlay")}</button><button class="mini" aria-label="叠加层选项">${ic("chev", 10)}</button></div>
      </div>
      <div class="crumbs">
        <span class="side l">${ic("right", 12)}</span>
        ${ic("scene")}<span class="txt">Scene</span><span class="sep">${ic("right", 12)}</span>
        ${ic("nodetree")}<span class="txt">Compositing Nodetree</span>
        <span class="side r">${ic("left", 12)}</span>
      </div>
    </div>`;
  }
}

/* ------------------------------------------------------------ outliner */

interface TreeRow {
  name: string; level: number; icon: string; tone?: string; arrow?: "open" | "closed";
  check?: boolean; eye?: boolean; cam?: "camera" | "cameraOff" | "purple"; extra?: [string, string][];
  dim?: boolean; selected?: boolean; boxed?: boolean;
}

const tree: TreeRow[] = [
  { name: "场景集合", level: 0, icon: "collection" },
  { name: "Collection", level: 1, icon: "collection", arrow: "closed", boxed: true, check: true, eye: true, cam: "camera", extra: [["mesh", "orange"], ["movie", "orange"]] },
  { name: "Eric_Promo_Rig_Simple", level: 1, icon: "collection", arrow: "open", check: true, eye: true, cam: "camera" },
  { name: "Eric_Promo_Rig_Simple", level: 2, icon: "armature", tone: "orange", arrow: "open", eye: true, cam: "camera" },
  { name: "姿态", level: 3, icon: "pose", tone: "green" },
  { name: "Armature.001", level: 3, icon: "armdata", tone: "green", arrow: "closed" },
  ...["Alex_LeftArm1st", "Alex_LeftArm1st.001", "Alex_RightArm1st", "Alex_RightArm1st.001"].map(
    (name): TreeRow => ({ name, level: 3, icon: "mesh", tone: "orange", arrow: "closed", dim: true, eye: true, cam: "cameraOff" })),
  { name: "Head1st", level: 3, icon: "mesh", tone: "orange", arrow: "closed", eye: true, cam: "camera", extra: [["wrenchLine", "blue"], ["vgroup", ""]] },
  { name: "Head1st.003", level: 3, icon: "mesh", tone: "orange", arrow: "closed", eye: true, cam: "camera", extra: [["wrenchLine", "blue"]], selected: true, boxed: true },
  { name: "LeftArm1st", level: 3, icon: "mesh", tone: "orange", arrow: "closed", eye: true, cam: "purple", extra: [["curve", ""]] },
  { name: "LeftLeg1st", level: 3, icon: "mesh", tone: "orange", arrow: "closed", eye: true, cam: "camera", extra: [["wrenchLine", "blue"]] },
];

@customElement("b-outliner")
export class BOutliner extends LitElement {
  static styles = [ui, css`
    :host { background: #282828; border-radius: 5px; overflow: hidden; }
    .bar { padding: 0 0 0 8px; height: 32px; gap: 6px; }
    .search { width: 144px; margin: 0 13px; align-items: center; padding-left: 6px; background: #1c1c1c; gap: 4px; }
    .clip { width: 25px; background: #545454; align-items: center; }
    ul { list-style: none; margin: 0; padding: 0; }
    li { display: flex; align-items: center; height: 25px; padding-right: 9px; white-space: nowrap; color: #c4c4c4; }
    li:nth-child(even) { background: #2b2b2b; }
    li.selected { background: #334d80; }
    .cell { width: 25px; height: 25px; flex: none; display: grid; place-items: center; border-radius: 4px; }
    .pad { width: 22px; flex: none; padding: 0; }
    .guide { width: 25px; height: 25px; flex: none; padding-left: 11px; }
    .guide::before { content: ""; display: block; height: 100%; border-left: 1px solid #8a8a8a; }
    .guide.dash::before { border-left-style: dashed; border-color: #6c6c6c; }
    .ico { color: #e0e0e0; }
    .boxed { background: #545454; } .selected .boxed { background: #5a6b90; }
    .orange { color: #c8834c; } .green { color: #14a886; } .blue { color: #5c83d6; }
    .dim .orange { color: #7a573c; } .dim .name, .dim .arrow { color: #777; }
    .arrow { color: #b4b4b4; }
    .text { flex: 1; min-width: 0; display: flex; align-items: center; overflow: hidden; padding-left: 6px; }
    .extras { display: flex; margin-left: 24px; }
    .name { flex: none; } .selected .name { color: #f5a02f; }
    .cell.act { color: #e6e6e6; width: 25px; }
    .cell.cameraOff { background: #7138c9; color: #d3c0f5; width: 23px; height: 23px; }
    .cell.purple { background: #7a2a9e; width: 23px; height: 23px; }
    li input[type="checkbox"], li input[type="checkbox"]:checked { width: 13px; height: 13px; background: #e6e6e6; border-radius: 2px; }
    li input[type="checkbox"]:checked::before { background: #282828; }
  `];
  private row(r: TreeRow): TemplateResult {
    return html`<li class=${classMap({ selected: !!r.selected, dim: !!r.dim })}>
      <span class="pad"></span>
      ${r.level > 1 ? html`<span class="guide"></span>` : nothing}
      ${r.level > 2 ? html`<span class="guide dash"></span>` : nothing}
      ${r.level > 0 ? (r.arrow ? html`<button class="cell arrow" aria-label="展开 ${r.name}">${ic(r.arrow, 10)}</button>` : html`<span class="cell"></span>`) : nothing}
      <span class="cell ico ${r.tone ?? ""} ${r.boxed ? "boxed" : ""}">${ic(r.icon)}</span>
      <span class="text"><span class="name">${r.name}</span>
        ${r.extra ? html`<span class="extras">${r.extra.map(([n, t]) => html`<span class="cell ${t}">${ic(n)}</span>`)}</span>` : nothing}
      </span>
      <span class="cell">${r.check ? html`<input type="checkbox" checked aria-label="启用 ${r.name}">` : nothing}</span>
      <span class="cell">${r.eye ? html`<button class="cell act" aria-label="显示 ${r.name}">${ic("eye")}</button>` : nothing}</span>
      <span class="cell">${r.cam ? html`<button class="cell act ${r.cam}" aria-label="渲染 ${r.name}">${ic(r.cam === "purple" ? "camera" : r.cam)}</button>` : nothing}</span>
    </li>`;
  }
  render() {
    return html`
      <div class="bar">
        ${drop("outliner", "编辑器类型")}${drop("layers", "显示模式")}
        <label class="box search">${ic("search")}<input type="text" aria-label="搜索"></label>
        ${drop("filter", "过滤")}
        <button class="box clip" aria-label="新建集合">${ic("collectionLine")}</button>
      </div>
      <ul>${tree.map((r) => this.row(r))}</ul>`;
  }
}

/* ---------------------------------------------------------- properties */

const tabs: [string, string, string][][] = [
  [["tool", "", "工具"]],
  [["render", "active", "渲染"], ["output", "", "输出"], ["layers", "", "视图层"], ["scene", "", "场景"], ["world", "red", "世界"]],
  [["collectionLine", "", "集合"]],
  [["object", "orange", "物体"], ["wrench", "blue", "修改器"], ["particles", "blue", "粒子"], ["physics", "blue", "物理"], ["constraint", "blue", "约束"], ["meshdata", "green", "数据"], ["material", "red", "材质"]],
];

@customElement("b-properties")
export class BProperties extends LitElement {
  static styles = [ui, css`
    :host { background: #303030; border-radius: 5px; overflow: hidden; --text: #e2e2e2; }
    .page { display: flex; flex-direction: column; height: 100%; }
    .bar { padding: 0 9px 0 8px; height: 31px; flex: none; }
    .search { width: 143px; margin-left: 39px; align-items: center; padding-left: 5px; background: #1c1c1c; }
    .more { width: 25px; align-items: center; }
    .body { display: flex; flex: 1; min-height: 0; }
    nav { width: 33px; flex: none; background: #1c1c1c; display: flex; flex-direction: column; gap: 11px; padding-top: 10px; }
    nav div { display: flex; flex-direction: column; gap: 2px; }
    nav button { width: 33px; height: 33px; flex: none; color: #b9b9b9; border-radius: 5px 0 0 5px; }
    nav .active { background: #303030; color: #e6e6e6; }
    nav .red { color: #bb5257; } nav .orange { color: #c8834c; } nav .blue { color: #5c83d0; } nav .green { color: #10b98a; }
    .content { flex: 1; min-width: 0; overflow: hidden; padding: 10px 9px 0 10px; }
    .title { display: flex; align-items: center; gap: 10px; height: 24px; padding: 0 2px 0 4px; margin-bottom: 21px; }
    .title b-icon:last-child { color: #8f8f8f; }
    .field { display: grid; grid-template-columns: 104px 1fr; gap: 12px; align-items: center; height: 25px; margin-bottom: 6px; }
    .field > label { text-align: right; }
    .field .box { padding-left: 9px; }
    .panel { margin-top: 12px; background: #353535; border-radius: 5px; overflow: hidden; }
    .ph { display: flex; align-items: center; height: 31px; background: #3d3d3d; gap: 5px; padding: 0 8px 0 10px; }
    .ph.sub { padding: 0 36px 0 27px; }
    .ph .chev { color: #b4b4b4; }
    .grid { display: grid; grid-template-columns: 105px 1fr; column-gap: 14px; align-items: center; padding: 10px 11px 0 0; text-align: right; }
    .pair { display: flex; gap: 8px; align-items: center; margin-bottom: 6px; }
    .grid .lab { margin-bottom: 6px; } .grid .lab.tight { margin: 0; }
    .value { height: 25px; border-radius: 4px; background: #545454; text-align: center; border: 1px solid #3a3a3a; }
    .value.top { border-radius: 4px 4px 0 0; } .value.mid { border-radius: 0; border-top: 0; } .value.end { border-radius: 0 0 4px 4px; border-top: 0; }
    .noise { display: flex; align-items: center; gap: 3px; height: 31px; padding: 0 26px; margin-top: 10px; }
    .noise b-icon { margin-right: 3px; color: #b4b4b4; }
    .noise label { display: flex; align-items: center; gap: 3px; }
  `];
  private group(noise: string, stack: [string, string][]): TemplateResult {
    return html`<div class="grid">
      <label class="lab" for="n${noise}">噪波阈值</label>
      <div class="pair"><input type="checkbox" checked aria-label="噪波阈值"><input type="text" id="n${noise}" class="value" value=${noise}></div>
      ${stack.map(([l, v], i) => html`<label class="lab tight" for="s${l}${v}">${l}</label>
        <input type="text" id="s${l}${v}" class="value ${i === 0 ? "top" : i === stack.length - 1 ? "end" : "mid"}" value=${v}>`)}
    </div>`;
  }
  render() {
    const denoise = (on: boolean) => html`<div class="noise">${ic("right", 12)}<label><input type="checkbox" ?checked=${on}>降噪</label></div>`;
    return html`<div class="page">
      <div class="bar">
        ${drop("properties", "编辑器类型")}
        <label class="box search">${ic("search")}<input type="text" aria-label="搜索"></label>
        <div class="space"></div><button class="box more" aria-label="选项">${ic("chev", 10)}</button>
      </div>
      <div class="body">
        <nav>${tabs.map((g) => html`<div>${g.map(([n, c, l]) => html`<button class=${c} aria-label=${l}>${ic(n)}</button>`)}</div>`)}</nav>
        <div class="content">
          <div class="title">${ic("scene")}<span>Scene</span><span class="space"></span>${ic("pin")}</div>
          ${[["渲染引擎", "Cycles"], ["特性集", "支持特性"], ["设备", "GPU 计算"]].map(([l, v]) => html`
            <div class="field"><label for=${l}>${l}</label><div class="box"><span class="pick"><select id=${l}><option>${v}</option></select>${ic("chev", 10)}</span></div></div>`)}
          <section class="panel">
            <div class="ph"><b-icon class="chev" name="chevThin" size="12"></b-icon>采样<span class="space"></span>${ic("grip", 16)}</div>
            <div class="ph sub"><b-icon class="chev" name="chevThin" size="12"></b-icon>视图<span class="space"></span>${ic("preset")}</div>
            ${this.group("0.1000", [["最大采样", "100"], ["最小采样", "0"]])}
            ${denoise(false)}
            <div class="ph sub"><b-icon class="chev" name="chevThin" size="12"></b-icon>渲染<span class="space"></span>${ic("preset")}</div>
            ${this.group("0.0100", [["最大采样", "128"], ["最小采样", "0"], ["时间限制", "0 sec"]])}
            ${denoise(true)}
          </section>
        </div>
      </div>
    </div>`;
  }
}

/* ----------------------------------------------------------- timelines */

@customElement("b-timeline")
export class BTimeline extends LitElement {
  static styles = [ui, css`
    :host { display: grid; grid-template-rows: 30px 30px; gap: 2px; --text: #dcdcdc; }
    .bar { height: 30px; background: #303030; border-radius: 5px; padding: 2px 8px 0 10px; }
    .mode { width: 127px; margin: 0 5px 0 8px; padding-left: 4px; align-items: center; gap: 8px; }
    .menu.pop { gap: 7px; padding: 0 2px 0 15px; }
    .tog button { width: 24px; background: #545454; color: #e0e0e0; }
    .tog .on { background: #4772b3; color: #fff; }
    .tog, .flt { margin-right: 6px; }
    .near { width: 109px; padding-left: 9px; margin-right: 6px; }
    .prop button { width: 24px; background: #545454; color: #9a9a9a; } .prop .fall { width: 40px; background: #2c2c2c; gap: 4px; color: #777; }
    .play { display: flex; align-items: center; margin-left: 38px; }
    .play .rec { width: 48px; margin-right: 7px; }
    .rec button { width: 24px; background: #545454; color: #fff; } .rec .c { background: #2c2c2c; color: #666; }
    .play > button { width: 25px; height: 24px; color: #e8e8e8; background: #404040; }
    .play > button:nth-of-type(1) { border-radius: 4px 0 0 4px; } .play > button:last-child { border-radius: 0 4px 4px 0; }
    .cur { width: 92px; height: 25px; border-radius: 5px; border: 1px solid #3a3a3a; background: #545454; margin-right: 8px; }
    .cur input { text-align: center; height: 100%; }
    .range { background: #545454; }
    .range button { width: 24px; }
    .range label { display: flex; align-items: center; white-space: nowrap; width: 108px; padding: 0 18px; border-left: 1px solid #3c3c3c; }
    .range label.wide { width: 118px; } .range label input { text-align: right; }
  `];
  render() {
    return html`
      <div class="bar">
        ${drop("dope", "编辑器类型")}
        <div class="box mode">${ic("dope")}${pick("动画摄影表", "模式")}</div>
        ${["视图", "选择", "标记", "通道", "关键帧"].map((t) => html`<button class="menu">${t}</button>`)}
        <div class="space"></div>
        <div class="box tog"><button class="on" aria-label="仅选中">${ic("cursor")}</button><button aria-label="隐藏">${ic("selbox")}</button><button aria-label="仅错误">${ic("warn")}</button></div>
        <span class="flt">${drop("filter", "过滤")}</span>
        <div class="box near">${pick("最近帧", "吸附")}</div>
        <div class="box prop"><button aria-label="衰减编辑">${ic("proportional")}</button><button class="fall" aria-label="衰减">${ic("falloff")}${ic("chev", 10)}</button></div>
      </div>
      <div class="bar">
        ${drop("clock", "编辑器类型")}
        <button class="menu pop">回放${ic("chev", 10)}</button><button class="menu pop">抠像(插帧)${ic("chev", 10)}</button>
        <button class="menu">视图</button><button class="menu">标记</button>
        <div class="space"></div>
        <div class="play">
          <div class="box rec"><button aria-label="自动插帧">${ic("record")}</button><button class="c" aria-label="插帧选项">${ic("chev", 10)}</button></div>
          ${[["first", "起始"], ["prevKey", "上一关键帧"], ["playBack", "倒放"], ["play", "播放"], ["nextKey", "下一关键帧"], ["last", "结尾"]].map(([n, l]) => html`<button aria-label=${l}>${ic(n)}</button>`)}
        </div>
        <div class="space"></div>
        <label class="cur"><input type="text" aria-label="当前帧" value="1"></label>
        <div class="box range">
          <button aria-label="预览范围">${ic("stopwatch")}</button>
          <label>起始<input type="text" value="1"></label>
          <label class="wide">结束点<input type="text" value="250"></label>
        </div>
      </div>`;
  }
}

/* ----------------------------------------------------------------- app */

@customElement("app-root")
export class AppRoot extends LitElement {
  static styles = [ui, css`
    :host { display: flex; flex-direction: column; height: 100vh; background: #161616; overflow: hidden; --text: #dcdcdc; }
    .titlebar { display: flex; align-items: center; height: 29px; flex: none; background: #fff; color: #000; padding: 0 4px 0 2px; font: 16px/20px "Open Sans", "Noto Sans CJK SC", sans-serif; gap: 5px; }
    .titlebar button { width: 58px; height: 29px; color: #000; }
    .wins { display: flex; margin-left: auto; }
    .top { display: flex; align-items: center; height: 33px; flex: none; background: #1c1c1c; padding: 0 10px 0 11px; }
    .logo { margin-right: 4px; }
    .tabs { display: flex; align-self: flex-end; margin-left: 20px; gap: 2px; color: #989898; }
    .tabs button { height: 27px; padding: 0 11px; border-radius: 5px 5px 0 0; }
    .tabs .active { background: #303030; color: #fff; }
    .tabs .add { padding: 0 2px; }
    .id { width: 239px; margin-left: 8px; background: #1c1c1c; }
    .id .drop { background: #282828; border-right: 1px solid #3f3f3f; }
    .id input { padding-left: 8px; }
    .id .act { width: 25px; flex: none; background: #545454; } .id .off { width: 25px; flex: none; background: #303030; color: #777; }
    .work { flex: 1; min-height: 0; display: grid; grid-template-columns: 1588fr 333fr; }
    .leftside { display: grid; grid-template-rows: 1fr auto; gap: 1px; min-height: 0; min-width: 0; }
    .editors { display: grid; grid-template-columns: 441fr 1149fr; min-height: 0; margin-right: -2px; }
    .stack { display: grid; grid-template-rows: 379fr 487fr; gap: 3px; min-height: 0; min-width: 0; }
    .rightside { display: grid; grid-template-rows: 374fr 552fr; gap: 3px; min-height: 0; min-width: 0; padding: 2px 2px 1px 2px; }
    b-timeline { margin-right: 3px; }
    .status { display: flex; align-items: center; height: 27px; flex: none; background: #1c1c1c; color: #8f8f8f; padding: 0 14px; white-space: nowrap; }
    .hint { display: flex; align-items: center; gap: 12px; }
    .hint b-icon { color: #a8a8a8; }
    .h2 { margin-left: 13px; } .h3 { margin-left: 128px; } .h4 { margin-left: 265px; }
  `];
  render() {
    const id = (icon: string, name: string) => html`<div class="box id">
      <button class="drop" aria-label="浏览 ${name}">${ic(icon)}${ic("chev", 10)}</button>
      <input type="text" aria-label="名称" value=${name}>
      <button class="act" aria-label="新建">${ic("copy")}</button><button class="off" aria-label="删除">${ic("close")}</button></div>`;
    const workspaces = ["Layout", "Modeling", "Sculpting", "UV Editing", "Texture Paint", "Shading", "Animation", "Rendering", "Compositing", "Geometry Nodes", "Scripting"];
    return html`
      <header class="titlebar">${ic("blenderColor", 20)}<span>Blender [F:\\Blender Files\\Rigs\\沙雕灯房V2\\Skin_Template_Simple.blend]</span>
        <div class="wins"><button aria-label="最小化">${ic("minimize")}</button><button aria-label="还原">${ic("restore")}</button><button aria-label="关闭">${ic("windowClose")}</button></div>
      </header>
      <div class="top">
        <button class="logo" aria-label="Blender">${ic("blender", 20)}</button>
        ${["文件", "编辑", "渲染", "窗口", "帮助"].map((t) => html`<button class="menu">${t}</button>`)}
        <div class="tabs">${workspaces.map((t) => html`<button class=${classMap({ active: t === "Compositing" })}>${t}</button>`)}<button class="add" aria-label="添加">${ic("plus")}</button></div>
        <div class="space"></div>
        ${id("scene", "Scene")}${id("layers", "ViewLayer")}
      </div>
      <main class="work">
        <div class="leftside">
          <div class="editors">
            <div class="stack"><b-viewport></b-viewport><b-shader></b-shader></div>
            <b-compositor></b-compositor>
          </div>
          <b-timeline></b-timeline>
        </div>
        <div class="rightside"><b-outliner></b-outliner><b-properties></b-properties></div>
      </main>
      <footer class="status">
        <span class="hint">${ic("mouse")}选择</span>
        <span class="hint h2">${ic("mouseMove")}套索选择</span>
        <span class="hint h3">${ic("mouseMid")}</span>
        <span class="hint h4">${ic("mouseRight")}切断连接</span>
        <span class="space"></span>
        <span>Collection | Head1st.003 | 顶点:674 | 面:619 | 三角面:1,238 | 物体:1/33 | 内存: 36.2 MiB | 显存: 0.2/4.0 GiB | 3.0.1</span>
      </footer>`;
  }
}
